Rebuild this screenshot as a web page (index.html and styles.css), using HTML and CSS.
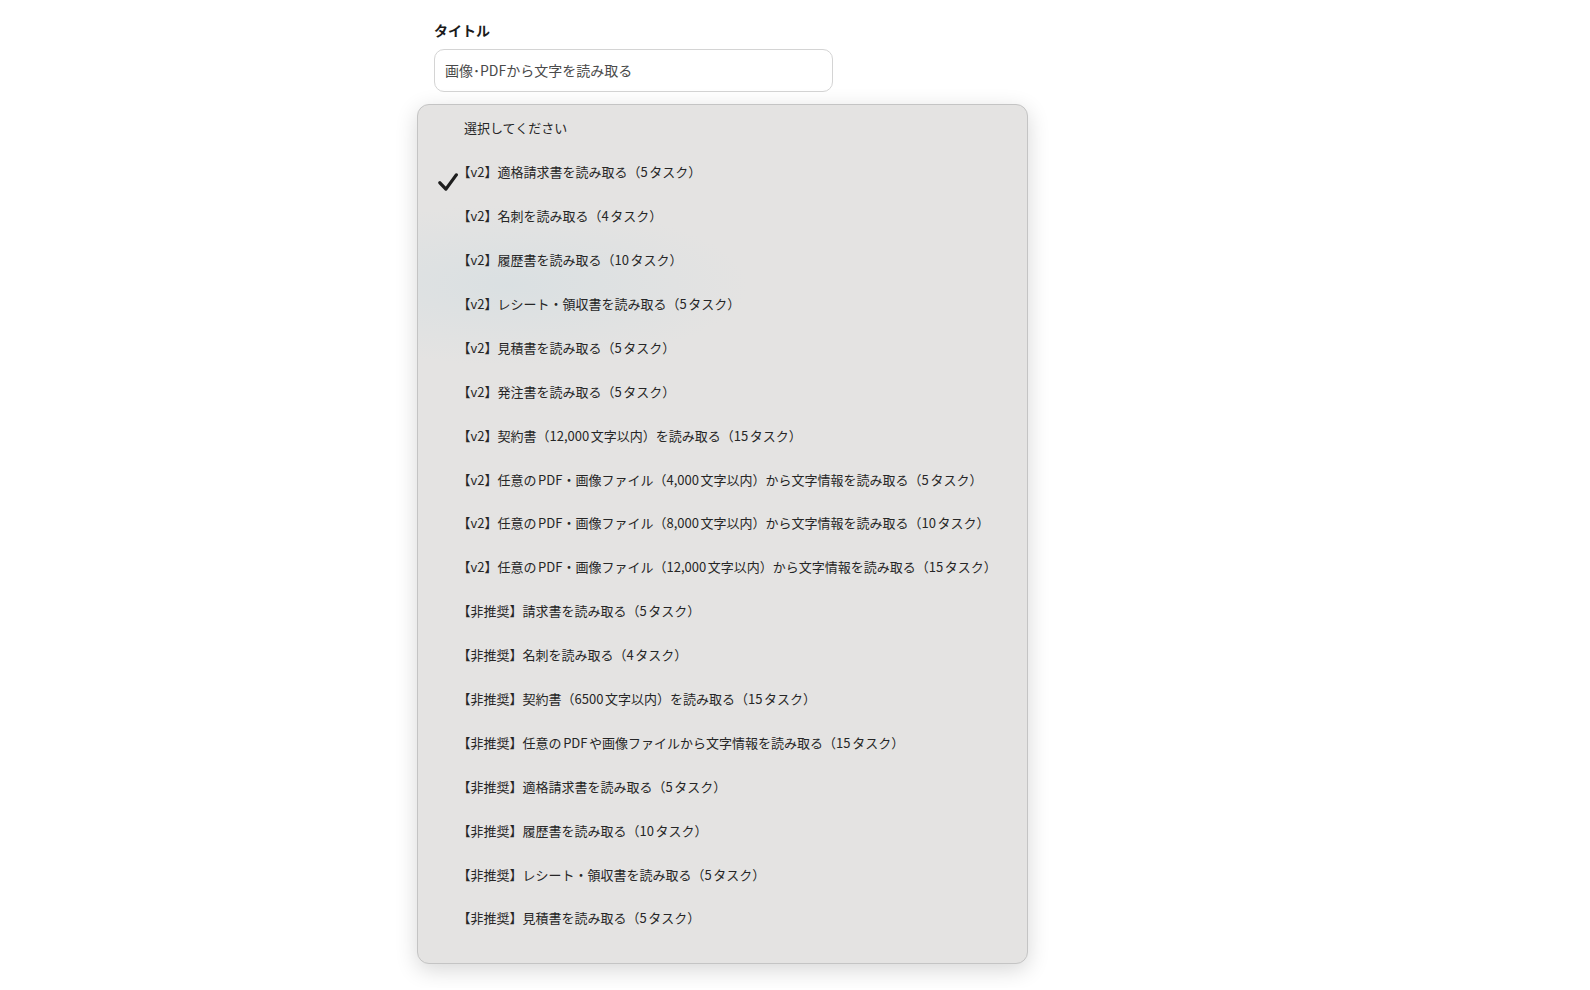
FILE: index.html
```html
<!DOCTYPE html>
<html lang="ja">
<head>
<meta charset="utf-8">
<title>タイトル</title>
<link rel="stylesheet" href="styles.css">
</head>
<body>
<main class="page">
  <section class="field">
    <div class="field-label">タイトル</div>
    <div class="text-input">画像･PDFから文字を読み取る</div>
    <div class="menu">
      <div class="menu-item">選択してください</div>
      <div class="menu-item"><span class="check"><svg viewBox="0 0 20 18" width="20" height="18"><path d="M1.9 9.8 L7.9 16.1 L18.3 1.9" fill="none" stroke="#1e1e1e" stroke-width="3.3" stroke-linecap="round" stroke-linejoin="round"/></svg></span>【v2】適格請求書を読み取る（5タスク）</div>
      <div class="menu-item">【v2】名刺を読み取る（4タスク）</div>
      <div class="menu-item">【v2】履歴書を読み取る（10タスク）</div>
      <div class="menu-item">【v2】レシート・領収書を読み取る（5タスク）</div>
      <div class="menu-item">【v2】見積書を読み取る（5タスク）</div>
      <div class="menu-item">【v2】発注書を読み取る（5タスク）</div>
      <div class="menu-item">【v2】契約書（12,000文字以内）を読み取る（15タスク）</div>
      <div class="menu-item">【v2】任意のPDF・画像ファイル（4,000文字以内）から文字情報を読み取る（5タスク）</div>
      <div class="menu-item">【v2】任意のPDF・画像ファイル（8,000文字以内）から文字情報を読み取る（10タスク）</div>
      <div class="menu-item">【v2】任意のPDF・画像ファイル（12,000文字以内）から文字情報を読み取る（15タスク）</div>
      <div class="menu-item">【非推奨】請求書を読み取る（5タスク）</div>
      <div class="menu-item">【非推奨】名刺を読み取る（4タスク）</div>
      <div class="menu-item">【非推奨】契約書（6500文字以内）を読み取る（15タスク）</div>
      <div class="menu-item">【非推奨】任意のPDFや画像ファイルから文字情報を読み取る（15タスク）</div>
      <div class="menu-item">【非推奨】適格請求書を読み取る（5タスク）</div>
      <div class="menu-item">【非推奨】履歴書を読み取る（10タスク）</div>
      <div class="menu-item">【非推奨】レシート・領収書を読み取る（5タスク）</div>
      <div class="menu-item">【非推奨】見積書を読み取る（5タスク）</div>
    </div>
  </section>
</main>
</body>
</html>
```

FILE: styles.css
```css
html, body {
  margin: 0;
  padding: 0;
  background: #ffffff;
}

body {
  font-family: "Noto Sans CJK JP", "Noto Sans", sans-serif;
  color: #222222;
}

.page {
  padding: 20px 0 24px 434px;
}

.field {
  width: 399px;
}

.field-label {
  font-size: 14px;
  line-height: 20px;
  font-weight: 700;
  color: #1b1b1b;
}

.text-input {
  margin-top: 9px;
  box-sizing: border-box;
  height: 43px;
  border: 1px solid #d4d4d4;
  border-radius: 10px;
  padding: 0 10px 2px 10px;
  display: flex;
  align-items: center;
  font-size: 14px;
  color: #4a4a4a;
}

.menu {
  margin: 12px 0 0 -17px;
  box-sizing: border-box;
  width: 611px;
  height: 860px;
  padding: 1px 0 20px 0;
  border: 1px solid #c4c4c4;
  border-radius: 12px;
  background-color: #e4e3e2;
  background-image: radial-gradient(240px 80px at 90px 180px, rgba(206, 220, 226, 0.45), rgba(206, 220, 226, 0));
  box-shadow: 0 6px 22px rgba(0, 0, 0, 0.16);
}

.menu-item {
  position: relative;
  height: 43.9px;
  display: flex;
  align-items: center;
  padding-left: 46px;
  font-size: 13px;
  color: #262626;
  white-space: nowrap;
  text-spacing-trim: trim-start;
  text-autospace: normal;
}

.check {
  position: absolute;
  left: 20px;
  top: 23px;
  width: 20px;
  height: 18px;
  display: block;
}

.check svg {
  display: block;
}
```
